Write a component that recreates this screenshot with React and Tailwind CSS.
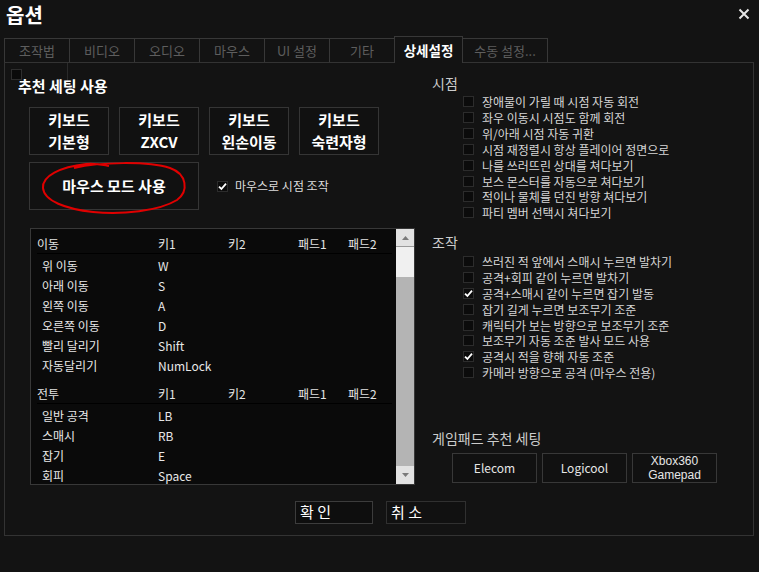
import React from "react";

const FONT = "font-['Noto_Sans_CJK_KR','Noto_Sans',sans-serif]";

function Check({ checked }) {
  return (
    <div className="w-[11px] h-[11px] shrink-0 border border-[#2c2c2c] bg-[#0b0b0b] flex items-center justify-center">
      {checked && (
        <svg width="9" height="9" viewBox="0 0 9 9">
          <path d="M1 4.6 L3.4 7 L8 1.6" fill="none" stroke="#ffffff" strokeWidth="1.8" />
        </svg>
      )}
    </div>
  );
}

const inactiveTabs = ["조작법", "비디오", "오디오", "마우스", "UI 설정", "기타"];

const kbButtons = [
  ["키보드", "기본형"],
  ["키보드", "ZXCV"],
  ["키보드", "왼손이동"],
  ["키보드", "숙련자형"],
];

const sections = [
  {
    title: "이동",
    rows: [
      ["위 이동", "W"],
      ["아래 이동", "S"],
      ["왼쪽 이동", "A"],
      ["오른쪽 이동", "D"],
      ["빨리 달리기", "Shift"],
      ["자동달리기", "NumLock"],
    ],
  },
  {
    title: "전투",
    rows: [
      ["일반 공격", "LB"],
      ["스매시", "RB"],
      ["잡기", "E"],
      ["회피", "Space"],
    ],
  },
];

const viewOpts = [
  ["장애물이 가릴 때 시점 자동 회전", false],
  ["좌우 이동시 시점도 함께 회전", false],
  ["위/아래 시점 자동 귀환", false],
  ["시점 재정렬시 항상 플레이어 정면으로", false],
  ["나를 쓰러뜨린 상대를 쳐다보기", false],
  ["보스 몬스터를 자동으로 쳐다보기", false],
  ["적이나 물체를 던진 방향 쳐다보기", false],
  ["파티 멤버 선택시 쳐다보기", false],
];

const ctrlOpts = [
  ["쓰러진 적 앞에서 스매시 누르면 발차기", false],
  ["공격+회피 같이 누르면 발차기", false],
  ["공격+스매시 같이 누르면 잡기 발동", true],
  ["잡기 길게 누르면 보조무기 조준", false],
  ["캐릭터가 보는 방향으로 보조무기 조준", false],
  ["보조무기 자동 조준 발사 모드 사용", false],
  ["공격시 적을 향해 자동 조준", true],
  ["카메라 방향으로 공격 (마우스 전용)", false],
];

function OptList({ items }) {
  return (
    <div className="mt-[1px] pl-[31px] flex flex-col">
      {items.map(([label, c]) => (
        <div key={label} className="h-[15.85px] flex items-center gap-[8px]">
          <Check checked={c} />
          <span className="text-[12px] leading-[15px] text-[#d6d6d6] whitespace-nowrap">{label}</span>
        </div>
      ))}
    </div>
  );
}

export default function App() {
  return (
    <div className={`w-[759px] h-[572px] bg-[#131313] relative overflow-hidden ${FONT}`}>
      {/* title bar */}
      <div className="h-[36px] flex items-start justify-between">
        <div className="pl-[6px] pt-[2px] text-[20px] leading-[26px] font-bold text-white">옵션</div>
        <div className="pr-[9px] pt-[8px]">
          <svg width="12" height="12" viewBox="0 0 12 12">
            <path d="M1.5 1.5 L10.5 10.5 M10.5 1.5 L1.5 10.5" stroke="#e6e6e6" strokeWidth="2" />
          </svg>
        </div>
      </div>

      {/* tabs */}
      <div className="h-[26px] flex items-end pl-[4px]">
        {inactiveTabs.map((t) => (
          <div
            key={t}
            className="w-[65px] h-[24px] border-t border-l border-[#383838] flex items-center justify-center text-[13px] text-[#5e5e5e]"
          >
            {t}
          </div>
        ))}
        <div className="relative z-10 -mb-[1px] w-[69px] h-[27px] border-t border-l border-r border-[#383838] bg-[#131313] flex items-center justify-center text-[13.5px] font-bold text-white">
          상세설정
        </div>
        <div className="w-[85px] h-[24px] border-t border-r border-[#383838] flex items-center justify-center text-[13px] text-[#5e5e5e]">
          수동 설정...
        </div>
      </div>

      {/* panel */}
      <div className="relative ml-[4px] w-[750px] h-[474px] border border-[#333333] flex flex-col">
        {/* artifacts */}
        <div className="absolute left-[62px] top-0 w-px h-[32px] bg-[#2a2a2a]" />
        <div className="absolute left-[6px] top-[6px] w-[11px] h-[11px] border border-[#2e2e2e] bg-[#0b0b0b]" />

        <div className="flex">
          {/* left column */}
          <div className="w-[427px] flex flex-col">
            <div className="relative mt-[13px] pl-[13px] text-[15px] leading-[20px] font-bold text-white">추천 세팅 사용</div>

            <div className="mt-[11px] pl-[24px] flex gap-[10px]">
              {kbButtons.map(([a, b]) => (
                <div
                  key={b}
                  className="w-[80px] h-[48px] border border-[#353535] bg-[#111111] flex flex-col items-center justify-center text-[15px] leading-[22px] font-bold text-white"
                >
                  <span>{a}</span>
                  <span>{b}</span>
                </div>
              ))}
            </div>

            <div className="mt-[7px] pl-[24px] flex items-center">
              <div className="relative w-[170px] h-[48px] border border-[#353535] bg-[#111111] flex items-center justify-center text-[15px] font-bold text-white">
                마우스 모드 사용
                <svg className="absolute left-0 top-[-3px]" width="175" height="58" viewBox="0 0 175 58">
                  <path
                    d="M44 8 C70 2 118 1 140 8 C157 14 159 31 147 40 C129 51 92 55 63 52 C36 49 14 41 13 28 C12 16 30 7 56 4 C66 3 73 5 79 6"
                    fill="none"
                    stroke="#e00000"
                    strokeWidth="2"
                  />
                </svg>
              </div>
              <div className="ml-[18px] flex items-center gap-[7px]">
                <Check checked />
                <span className="text-[12px] text-[#dcdcdc]">마우스로 시점 조작</span>
              </div>
            </div>

            {/* key table */}
            <div className="mt-[18px] ml-[25px] w-[385px] h-[257px] border border-[#383838] bg-[#0a0a0a] flex">
              <div className="w-[365px] h-full overflow-hidden pt-[5px]">
                {sections.map((s, si) => (
                  <div key={s.title} className={si > 0 ? "mt-[8px]" : ""}>
                    <div className="ml-[6px] mr-[4px] h-[20px] border-b border-black grid grid-cols-[121px_70px_70px_50px_1fr] items-center text-[12px] text-[#e4e4e4]">
                      <span>{s.title}</span>
                      <span>키1</span>
                      <span>키2</span>
                      <span>패드1</span>
                      <span>패드2</span>
                    </div>
                    <div className="mt-[2px]">
                      {s.rows.map(([a, b]) => (
                        <div
                          key={a}
                          className="ml-[6px] h-[20px] grid grid-cols-[121px_70px_70px_50px_1fr] items-center text-[12px] text-[#e8e8e8]"
                        >
                          <span className="pl-[5px]">{a}</span>
                          <span>{b}</span>
                          <span />
                          <span />
                          <span />
                        </div>
                      ))}
                    </div>
                  </div>
                ))}
              </div>
              {/* scrollbar */}
              <div className="w-[18px] h-full bg-[#b4b4b4] flex flex-col justify-between">
                <div>
                  <div className="h-[18px] bg-[#e2e2e2] border-b border-[#9a9a9a] flex items-center justify-center">
                    <svg width="7" height="4" viewBox="0 0 7 4">
                      <path d="M0 4 L3.5 0 L7 4 Z" fill="#7a7a7a" />
                    </svg>
                  </div>
                  <div className="h-[30px] bg-[#f0f0f0]" />
                </div>
                <div className="h-[18px] bg-[#e2e2e2] flex items-center justify-center">
                  <svg width="7" height="4" viewBox="0 0 7 4">
                    <path d="M0 0 L3.5 4 L7 0 Z" fill="#7a7a7a" />
                  </svg>
                </div>
              </div>
            </div>
          </div>

          {/* right column */}
          <div className="flex-1 flex flex-col">
            <div className="mt-[10px] h-[20px] flex items-center text-[14px] text-[#cccccc]">시점</div>
            <OptList items={viewOpts} />
            <div className="mt-[12px] h-[20px] flex items-center text-[14px] text-[#cccccc]">조작</div>
            <OptList items={ctrlOpts} />
            <div className="mt-[48px] h-[20px] flex items-center text-[14px] text-[#cccccc]">게임패드 추천 세팅</div>
            <div className="mt-[4px] pl-[20px] flex gap-[5px]">
              <div className="w-[85px] h-[30px] border border-[#383838] bg-[#111111] flex items-center justify-center text-[12px] text-[#e6e6e6]">Elecom</div>
              <div className="w-[85px] h-[30px] border border-[#383838] bg-[#111111] flex items-center justify-center text-[12px] text-[#e6e6e6]">Logicool</div>
              <div className="w-[85px] h-[30px] border border-[#383838] bg-[#111111] flex flex-col items-center justify-center font-['Liberation_Sans',sans-serif] text-[12px] text-[#e6e6e6]">
                <span className="block h-[14px] leading-[14px]">Xbox360</span>
                <span className="block h-[14px] leading-[14px]">Gamepad</span>
              </div>
            </div>
          </div>
        </div>

        {/* bottom buttons */}
        <div className="mt-[16px] pl-[290px] flex gap-[13px]">
          <div className="w-[78px] h-[23px] border border-[#3c3c3c] bg-[#0e0e0e] flex items-center pl-[4px] text-[15px] text-white">확 인</div>
          <div className="w-[80px] h-[23px] border border-[#303030] bg-[#111111] flex items-center pl-[4px] text-[15px] text-white">취 소</div>
        </div>
      </div>
    </div>
  );
}
